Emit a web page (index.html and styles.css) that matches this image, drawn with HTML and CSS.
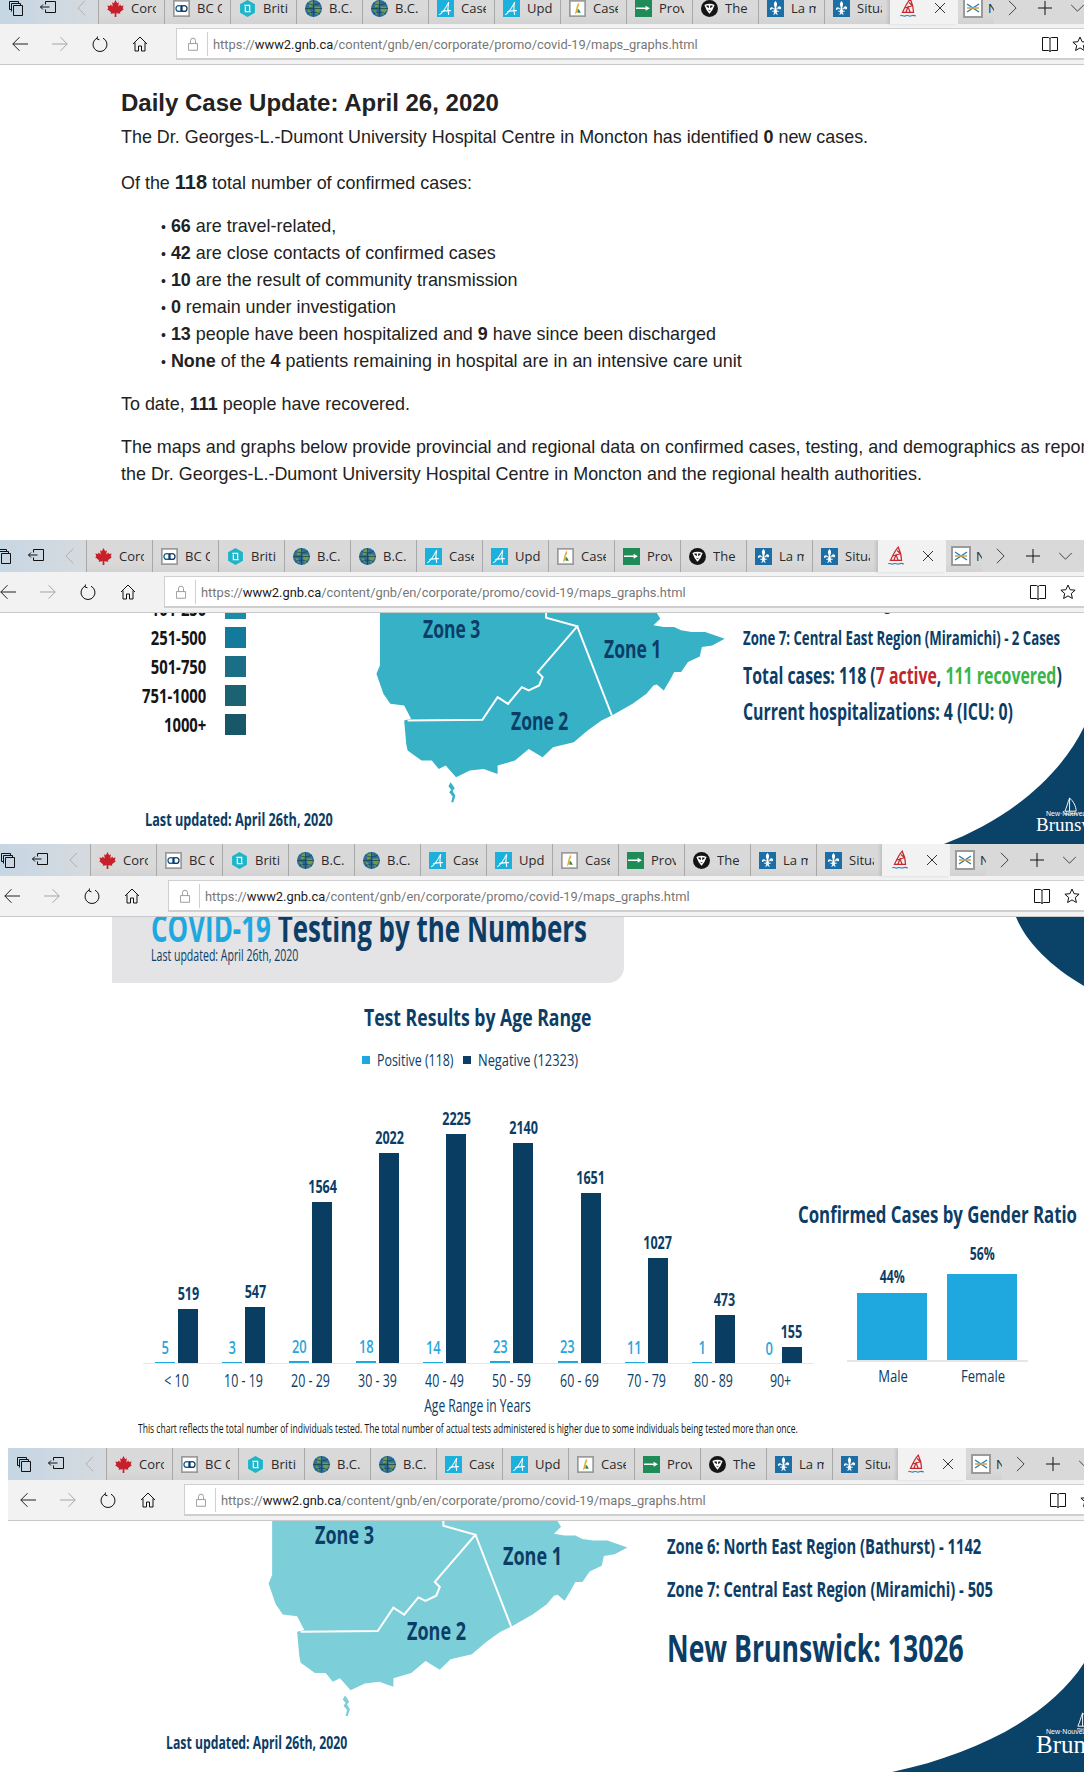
FILE: index.html
```html
<!DOCTYPE html>
<html lang="en">
<head>
<meta charset="utf-8">
<title>COVID-19 maps and graphs</title>
<link rel="stylesheet" href="styles.css">
</head>
<body>
<svg class="defs" aria-hidden="true">
  <symbol id="f-leaf" viewBox="0 0 16 16"><path fill="#c8202a" d="M8 0l1.600 3 1.600-.8-.6 4 2-2 .6 1.400 2.400-.4-.8 2.600 1 .8-3.600 3 .4 1.400-3.800-.5V16H7.200v-3.500l-3.800.5.4-1.400-3.600-3 1-.8-.8-2.600 2.400.4.600-1.400 2 2-.6-4 1.600.8z"/></symbol>
  <symbol id="f-cbc" viewBox="0 0 20 20"><rect x="1" y="1" width="18" height="18" fill="#fff" stroke="#9a9a9a" stroke-width="2"/><circle cx="7" cy="10" r="3.500" fill="none" stroke="#1b5f8e" stroke-width="1.500"/><circle cx="13" cy="10" r="3.500" fill="none" stroke="#123c66" stroke-width="1.500"/><rect x="9" y="6" width="2" height="8" fill="#123c66"/></symbol>
  <symbol id="f-hex" viewBox="0 0 16 16"><path fill="#1fb5c9" d="M8 0l7 4v8l-7 4-7-4V4z"/><path fill="none" stroke="#fff" stroke-width="1.200" d="M5 5h5v5M11 11H6V6"/></symbol>
  <symbol id="f-globe" viewBox="0 0 16 16"><circle cx="8" cy="8" r="8" fill="#2a6d9b"/><path fill="#6f9c46" d="M3 3l4-2 2 2-2 3-3 1zM9 6l5 0 1 3-3 5-2-1zM2 9l3 1 1 4-2-1z"/><path fill="none" stroke="#1d3f50" stroke-width=".7" d="M0 8h16M8 0v16M2 3c4 2 8 2 12 0M2 13c4-2 8-2 12 0"/></symbol>
  <symbol id="f-a" viewBox="0 0 16 16"><rect width="16" height="16" fill="#1cb0dc"/><path fill="none" stroke="#fff" stroke-width="1" d="M2 14C6 12 9 6 11 2c-1 4-1 8 0 12M4 11c3-1 6-1 9-1"/></symbol>
  <symbol id="f-case" viewBox="0 0 20 20"><rect x="1" y="1" width="18" height="18" fill="#fff" stroke="#9a9a9a" stroke-width="2"/><path fill="#e0a93a" d="M11 3l1 3-2 4 1 3-4 4 1-5 1-4z"/><path fill="#2c8a4a" d="M11 10l3 5h-4z"/></symbol>
  <symbol id="f-green" viewBox="0 0 16 16"><rect width="16" height="16" fill="#1f8b57"/><path fill="#fff" d="M1 7h9v1.500H1zM10 5.500l4 2.200-4 2.300z"/></symbol>
  <symbol id="f-on" viewBox="0 0 16 16"><circle cx="8" cy="8" r="8" fill="#151515"/><path fill="none" stroke="#fff" stroke-width="1.300" d="M4 5c2-1 6-1 8 0-1 3-2 5-4 7-2-2-3-4-4-7zM8 5v4M5 7l3 2 3-2"/></symbol>
  <symbol id="f-qc" viewBox="0 0 16 16"><rect width="16" height="16" fill="#1b6ea6"/><path fill="#fff" d="M8 1c1.500 1.500 2 3 1 5l-.4 2h1.200c-.4-1.500 2-3 3.200-1.500.8 1.200-.2 2.700-1.500 2.200.4-.8-.6-1.200-1 0H8.800l.7 1.300H11v1H9c.2 1 .8 1.500 1 3-1 0-1.600-.8-2-1.500-.4.700-1 1.500-2 1.500.2-1.500.8-2 1-3H5v-1h1.500l.7-1.300H5.500c-.4-1.200-1.400-.8-1 0C3.200 10.200 2.200 8.700 3 7.500 4.200 6 6.600 7.500 6.200 8h1.200L7 6C6 4 6.500 2.500 8 1z"/></symbol>
  <symbol id="f-sail" viewBox="0 0 16 18"><path fill="none" stroke="#c8282c" stroke-width="1.100" d="M10 1C7 4 5 9 3 13h10c0-4-1-8-3-12zM9 4l3 3-7 2M6 13l2-5 2 5"/><path fill="none" stroke="#2a7fc0" stroke-width="1.100" d="M1 16c2-1 3 1 5 0s3 1 5 0 3 0 4 0"/></symbol>
  <symbol id="f-nb" viewBox="0 0 20 20"><rect x="1" y="1" width="18" height="18" fill="#fff" stroke="#9a9a9a" stroke-width="2"/><path fill="none" stroke="#2c7fb0" stroke-width="1.500" d="M4 6l12 8M16 6L4 14"/><path fill="none" stroke="#d8a040" stroke-width="1.500" d="M4 10h12"/></symbol>
  <symbol id="i-tabs" viewBox="0 0 16 16"><path fill="none" stroke="#111" d="M1.500 1.500h9v2M1.500 1.500v8h2M3.500 3.500h9v2M3.500 3.500v8M5.500 5.500h9v10h-9z"/></symbol>
  <symbol id="i-aside" viewBox="0 0 16 16"><path fill="none" stroke="#111" d="M5.500 4.500V1.500h10v11h-10V9.500M.5 7h9M3 4.500L.5 7 3 9.500"/></symbol>
  <symbol id="i-left" viewBox="0 0 16 16"><path fill="none" stroke="currentColor" d="M16 8H.8M7.500 1.200L.8 8l6.700 6.800"/></symbol>
  <symbol id="i-refresh" viewBox="0 0 16 16"><path fill="none" stroke="#111" d="M5 2.200A7 7 0 1 0 11 2.200M5.500.5L5 3l2.500.8"/></symbol>
  <symbol id="i-home" viewBox="0 0 16 16"><path fill="none" stroke="#111" d="M1 8l7-7 7 7M3 6.500v8.500h3.500v-5h3v5H13V6.500"/></symbol>
  <symbol id="i-lock" viewBox="0 0 12 16"><path fill="none" stroke="#8a8a8a" d="M3 7V4a3 3 0 0 1 6 0v3M.5 7.500h11v8H.5z"/></symbol>
  <symbol id="i-book" viewBox="0 0 16 16"><path fill="none" stroke="#111" d="M.5 1.500h6l1.500 1v13l-1.500-1h-6zM15.500 1.500h-6L8 2.500M15.500 1.500v13h-6L8 15.500"/></symbol>
  <symbol id="i-star" viewBox="0 0 16 16"><path fill="none" stroke="#111" d="M8 1l2.100 4.700 5 .5-3.800 3.300 1.100 5L8 11.900l-4.400 2.600 1.100-5L.9 6.200l5-.5z"/></symbol>
  <symbol id="i-x" viewBox="0 0 12 12"><path fill="none" stroke="#333" d="M1 1l10 10M11 1L1 11"/></symbol>
  <symbol id="i-plus" viewBox="0 0 16 16"><path fill="none" stroke="#111" d="M8 1v14M1 8h14"/></symbol>
  <symbol id="i-next" viewBox="0 0 10 18"><path fill="none" stroke="currentColor" d="M1 1l8 8-8 8"/></symbol>
  <symbol id="i-down" viewBox="0 0 16 10"><path fill="none" stroke="#333" d="M1 1l7 7 7-7"/></symbol>
  <symbol id="brand-sail" viewBox="0 0 16 20"><path fill="none" stroke="#fff" stroke-width="1" d="M7 1C5 6 4 11 2 15h12C14 10 11 4 7 1zM7 1v14M1 18c3-1 5 1 7 0s4 0 7 0"/></symbol>
  <symbol id="nb-map" viewBox="540 248 520 590" preserveAspectRatio="none">
    <path fill="currentColor" d="M550 248H950L955 265 945 285 960 290 975 290 985 300 1000 305 1020 305 1048 325 1030 345 1015 350 1012 378 995 395 985 425 975 425 970 445 960 480 950 462 945 465 935 490 915 520 885 555 870 570 850 600 830 635 800 650 785 680 765 655 745 690 720 705 720 730 700 715 680 720 660 740 645 705 635 715 625 690 610 690 590 660 588 640 585 570 595 565 585 525 565 520 555 490 545 430 550 405Z"/>
    <path fill="currentColor" d="M652 755l-3 12 4 10-3 8 5 12-2 18 3 0 3-20-4-14 3-8-3-10z"/>
    <path fill="none" stroke="#fff" stroke-width="2" vector-effect="non-scaling-stroke" d="M790 248V262L835 288 778 425 785 440 780 465 765 480 755 470 735 520 720 500 698 568 590 570M835 288L885 555"/>
  </symbol>
</svg>

<section class="slice slice-one">
  <div class="chrome chrome-one">
    <div class="tabstrip">
      <span class="sysicon"><svg class="i16"><use href="#i-tabs"/></svg></span>
      <span class="sysicon"><svg class="i16"><use href="#i-aside"/></svg></span>
      <span class="sysicon prev"><svg class="i-nav"><use href="#i-next"/></svg></span>
      <div class="tab"><svg class="fav"><use href="#f-leaf"/></svg><span class="tab-t">Coronavirus</span></div>
      <div class="tab"><svg class="fav"><use href="#f-cbc"/></svg><span class="tab-t">BC Centre</span></div>
      <div class="tab"><svg class="fav"><use href="#f-hex"/></svg><span class="tab-t">British</span></div>
      <div class="tab"><svg class="fav"><use href="#f-globe"/></svg><span class="tab-t">B.C.</span></div>
      <div class="tab"><svg class="fav"><use href="#f-globe"/></svg><span class="tab-t">B.C.</span></div>
      <div class="tab"><svg class="fav"><use href="#f-a"/></svg><span class="tab-t">Cases</span></div>
      <div class="tab"><svg class="fav"><use href="#f-a"/></svg><span class="tab-t">Update</span></div>
      <div class="tab"><svg class="fav"><use href="#f-case"/></svg><span class="tab-t">Cases</span></div>
      <div class="tab"><svg class="fav"><use href="#f-green"/></svg><span class="tab-t">Province</span></div>
      <div class="tab"><svg class="fav"><use href="#f-on"/></svg><span class="tab-t">The</span></div>
      <div class="tab"><svg class="fav"><use href="#f-qc"/></svg><span class="tab-t">La ma</span></div>
      <div class="tab"><svg class="fav"><use href="#f-qc"/></svg><span class="tab-t">Situation</span></div>
      <div class="tab active"><svg class="fav"><use href="#f-sail"/></svg><svg class="tab-x"><use href="#i-x"/></svg></div>
      <div class="tab last"><svg class="fav"><use href="#f-nb"/></svg><span class="tab-t">N</span></div>
      <span class="sysicon next"><svg class="i-nav"><use href="#i-next"/></svg></span>
      <span class="sysicon plus"><svg class="i16"><use href="#i-plus"/></svg></span>
      <span class="sysicon down"><svg class="i-down"><use href="#i-down"/></svg></span>
    </div>
    <div class="toolbar">
      <span class="navbtn"><svg class="i16"><use href="#i-left"/></svg></span>
      <span class="navbtn off"><svg class="i16 flip"><use href="#i-left"/></svg></span>
      <span class="navbtn"><svg class="i16"><use href="#i-refresh"/></svg></span>
      <span class="navbtn"><svg class="i16"><use href="#i-home"/></svg></span>
      <div class="address">
        <svg class="lock"><use href="#i-lock"/></svg>
        <span class="url">https://<b>www2.gnb.ca</b>/content/gnb/en/corporate/promo/covid-19/maps_graphs.html</span>
        <svg class="i16 book"><use href="#i-book"/></svg>
        <svg class="i16 star"><use href="#i-star"/></svg>
      </div>
    </div>
  </div>
  <article class="update">
    <h1>Daily Case Update: April 26, 2020</h1>
    <p class="first">The Dr. Georges-L.-Dumont University Hospital Centre in Moncton has identified <b>0</b> new cases.</p>
    <p class="gap19">Of the <b class="big">118</b> total number of confirmed cases:</p>
    <ul>
      <li><b>66</b> are travel-related,</li>
      <li><b>42</b> are close contacts of confirmed cases</li>
      <li><b>10</b> are the result of community transmission</li>
      <li><b>0</b> remain under investigation</li>
      <li><b>13</b> people have been hospitalized and <b>9</b> have since been discharged</li>
      <li><b>None</b> of the <b>4</b> patients remaining in hospital are in an intensive care unit</li>
    </ul>
    <p class="gap16">To date, <b>111</b> people have recovered.</p>
    <p class="gap15">The maps and graphs below provide provincial and regional data on confirmed cases, testing, and demographics as reported by<br>the Dr. Georges-L.-Dumont University Hospital Centre in Moncton and the regional health authorities.</p>
  </article>
</section>

<section class="slice slice-two">
  <div class="chrome chrome-two">
    <div class="tabstrip">
      <span class="sysicon"><svg class="i16"><use href="#i-tabs"/></svg></span>
      <span class="sysicon"><svg class="i16"><use href="#i-aside"/></svg></span>
      <span class="sysicon prev"><svg class="i-nav"><use href="#i-next"/></svg></span>
      <div class="tab"><svg class="fav"><use href="#f-leaf"/></svg><span class="tab-t">Coronavirus</span></div>
      <div class="tab"><svg class="fav"><use href="#f-cbc"/></svg><span class="tab-t">BC Centre</span></div>
      <div class="tab"><svg class="fav"><use href="#f-hex"/></svg><span class="tab-t">British</span></div>
      <div class="tab"><svg class="fav"><use href="#f-globe"/></svg><span class="tab-t">B.C.</span></div>
      <div class="tab"><svg class="fav"><use href="#f-globe"/></svg><span class="tab-t">B.C.</span></div>
      <div class="tab"><svg class="fav"><use href="#f-a"/></svg><span class="tab-t">Cases</span></div>
      <div class="tab"><svg class="fav"><use href="#f-a"/></svg><span class="tab-t">Update</span></div>
      <div class="tab"><svg class="fav"><use href="#f-case"/></svg><span class="tab-t">Cases</span></div>
      <div class="tab"><svg class="fav"><use href="#f-green"/></svg><span class="tab-t">Province</span></div>
      <div class="tab"><svg class="fav"><use href="#f-on"/></svg><span class="tab-t">The</span></div>
      <div class="tab"><svg class="fav"><use href="#f-qc"/></svg><span class="tab-t">La ma</span></div>
      <div class="tab"><svg class="fav"><use href="#f-qc"/></svg><span class="tab-t">Situation</span></div>
      <div class="tab active"><svg class="fav"><use href="#f-sail"/></svg><svg class="tab-x"><use href="#i-x"/></svg></div>
      <div class="tab last"><svg class="fav"><use href="#f-nb"/></svg><span class="tab-t">N</span></div>
      <span class="sysicon next"><svg class="i-nav"><use href="#i-next"/></svg></span>
      <span class="sysicon plus"><svg class="i16"><use href="#i-plus"/></svg></span>
      <span class="sysicon down"><svg class="i-down"><use href="#i-down"/></svg></span>
    </div>
    <div class="toolbar">
      <span class="navbtn"><svg class="i16"><use href="#i-left"/></svg></span>
      <span class="navbtn off"><svg class="i16 flip"><use href="#i-left"/></svg></span>
      <span class="navbtn"><svg class="i16"><use href="#i-refresh"/></svg></span>
      <span class="navbtn"><svg class="i16"><use href="#i-home"/></svg></span>
      <div class="address">
        <svg class="lock"><use href="#i-lock"/></svg>
        <span class="url">https://<b>www2.gnb.ca</b>/content/gnb/en/corporate/promo/covid-19/maps_graphs.html</span>
        <svg class="i16 book"><use href="#i-book"/></svg>
        <svg class="i16 star"><use href="#i-star"/></svg>
      </div>
    </div>
  </div>
  <div class="infomap map-cases">
    <div class="leftcol">
      <div class="legend">
        <div class="legend-row"><span class="legend-label"><span class="legend-text">101-250</span></span><i class="sw sw1"></i></div>
        <div class="legend-row"><span class="legend-label"><span class="legend-text">251-500</span></span><i class="sw sw2"></i></div>
        <div class="legend-row"><span class="legend-label"><span class="legend-text">501-750</span></span><i class="sw sw3"></i></div>
        <div class="legend-row"><span class="legend-label"><span class="legend-text">751-1000</span></span><i class="sw sw4"></i></div>
        <div class="legend-row"><span class="legend-label"><span class="legend-text">1000+</span></span><i class="sw sw5"></i></div>
      </div>
      <div class="updated">Last updated: April 26th, 2020</div>
    </div>
    <div class="mapwrap">
      <svg class="mapsvg"><use href="#nb-map"/></svg>
      <span class="zone z3">Zone 3</span>
      <span class="zone z1">Zone 1</span>
      <span class="zone z2">Zone 2</span>
    </div>
    <div class="facts">
      <div class="fact clipped">Zone 6: North East Region (Bathurst) - 42 Cases</div>
      <div class="fact">Zone 7: Central East Region (Miramichi) - 2 Cases</div>
      <div class="fact strong">Total cases: 118 (<span class="red">7 active</span>, <span class="green">111 recovered</span>)</div>
      <div class="fact strong hosp">Current hospitalizations: 4 (ICU: 0)</div>
    </div>
    <svg class="swoosh" viewBox="0 0 142 117" preserveAspectRatio="none"><path d="M2 117C60 95 115 55 142 0V117Z"/></svg>
    <div class="brand"><svg class="brand-sail"><use href="#brand-sail"/></svg><span class="brand-new">New·Nouveau</span><span class="brand-name">Brunswick</span></div>
  </div>
</section>

<section class="slice slice-three">
  <div class="chrome chrome-three">
    <div class="tabstrip">
      <span class="sysicon"><svg class="i16"><use href="#i-tabs"/></svg></span>
      <span class="sysicon"><svg class="i16"><use href="#i-aside"/></svg></span>
      <span class="sysicon prev"><svg class="i-nav"><use href="#i-next"/></svg></span>
      <div class="tab"><svg class="fav"><use href="#f-leaf"/></svg><span class="tab-t">Coronavirus</span></div>
      <div class="tab"><svg class="fav"><use href="#f-cbc"/></svg><span class="tab-t">BC Centre</span></div>
      <div class="tab"><svg class="fav"><use href="#f-hex"/></svg><span class="tab-t">British</span></div>
      <div class="tab"><svg class="fav"><use href="#f-globe"/></svg><span class="tab-t">B.C.</span></div>
      <div class="tab"><svg class="fav"><use href="#f-globe"/></svg><span class="tab-t">B.C.</span></div>
      <div class="tab"><svg class="fav"><use href="#f-a"/></svg><span class="tab-t">Cases</span></div>
      <div class="tab"><svg class="fav"><use href="#f-a"/></svg><span class="tab-t">Update</span></div>
      <div class="tab"><svg class="fav"><use href="#f-case"/></svg><span class="tab-t">Cases</span></div>
      <div class="tab"><svg class="fav"><use href="#f-green"/></svg><span class="tab-t">Province</span></div>
      <div class="tab"><svg class="fav"><use href="#f-on"/></svg><span class="tab-t">The</span></div>
      <div class="tab"><svg class="fav"><use href="#f-qc"/></svg><span class="tab-t">La ma</span></div>
      <div class="tab"><svg class="fav"><use href="#f-qc"/></svg><span class="tab-t">Situation</span></div>
      <div class="tab active"><svg class="fav"><use href="#f-sail"/></svg><svg class="tab-x"><use href="#i-x"/></svg></div>
      <div class="tab last"><svg class="fav"><use href="#f-nb"/></svg><span class="tab-t">N</span></div>
      <span class="sysicon next"><svg class="i-nav"><use href="#i-next"/></svg></span>
      <span class="sysicon plus"><svg class="i16"><use href="#i-plus"/></svg></span>
      <span class="sysicon down"><svg class="i-down"><use href="#i-down"/></svg></span>
    </div>
    <div class="toolbar">
      <span class="navbtn"><svg class="i16"><use href="#i-left"/></svg></span>
      <span class="navbtn off"><svg class="i16 flip"><use href="#i-left"/></svg></span>
      <span class="navbtn"><svg class="i16"><use href="#i-refresh"/></svg></span>
      <span class="navbtn"><svg class="i16"><use href="#i-home"/></svg></span>
      <div class="address">
        <svg class="lock"><use href="#i-lock"/></svg>
        <span class="url">https://<b>www2.gnb.ca</b>/content/gnb/en/corporate/promo/covid-19/maps_graphs.html</span>
        <svg class="i16 book"><use href="#i-book"/></svg>
        <svg class="i16 star"><use href="#i-star"/></svg>
      </div>
    </div>
  </div>
  <div class="testing">
    <svg class="swoosh-top" viewBox="0 0 68 69" preserveAspectRatio="none"><path d="M0 0C10 25 35 50 68 69V0Z"/></svg>
    <header class="banner">
      <h2 class="banner-title"><span class="cyan">COVID-19</span> Testing by the Numbers</h2>
      <div class="banner-sub">Last updated: April 26th, 2020</div>
    </header>
    <h3 class="chart-title">Test Results by Age Range</h3>
    <div class="chart-key"><i class="key key-pos"></i><span class="key-label key-label-pos">Positive (118)</span><i class="key key-neg"></i><span class="key-label key-label-neg">Negative (12323)</span></div>
    <div class="charts">
      <div class="age">
        <div class="plot">
          <div class="group"><div class="col pos"><span>5</span><i style="height:1px"></i></div><div class="col neg"><span>519</span><i style="height:54px"></i></div></div>
          <div class="group"><div class="col pos"><span>3</span><i style="height:1px"></i></div><div class="col neg"><span>547</span><i style="height:56px"></i></div></div>
          <div class="group"><div class="col pos"><span>20</span><i style="height:2px"></i></div><div class="col neg"><span>1564</span><i style="height:161px"></i></div></div>
          <div class="group"><div class="col pos"><span>18</span><i style="height:2px"></i></div><div class="col neg"><span>2022</span><i style="height:210px"></i></div></div>
          <div class="group"><div class="col pos"><span>14</span><i style="height:1px"></i></div><div class="col neg"><span>2225</span><i style="height:229px"></i></div></div>
          <div class="group"><div class="col pos"><span>23</span><i style="height:2px"></i></div><div class="col neg"><span>2140</span><i style="height:220px"></i></div></div>
          <div class="group"><div class="col pos"><span>23</span><i style="height:2px"></i></div><div class="col neg"><span>1651</span><i style="height:170px"></i></div></div>
          <div class="group"><div class="col pos"><span>11</span><i style="height:1px"></i></div><div class="col neg"><span>1027</span><i style="height:105px"></i></div></div>
          <div class="group"><div class="col pos"><span>1</span><i style="height:1px"></i></div><div class="col neg"><span>473</span><i style="height:48px"></i></div></div>
          <div class="group"><div class="col pos"><span>0</span><i style="height:0"></i></div><div class="col neg"><span>155</span><i style="height:16px"></i></div></div>
        </div>
        <div class="ticks">
          <span>&lt; 10</span><span>10 - 19</span><span>20 - 29</span><span>30 - 39</span><span>40 - 49</span><span>50 - 59</span><span>60 - 69</span><span>70 - 79</span><span>80 - 89</span><span>90+</span>
        </div>
        <div class="axis-title">Age Range in Years</div>
      </div>
      <div class="gender">
        <h3 class="gender-title">Confirmed Cases by Gender Ratio</h3>
        <div class="gender-plot">
          <div class="gcol gcol-male"><span>44%</span><i style="height:67px"></i></div>
          <div class="gcol gcol-female"><span>56%</span><i style="height:86px"></i></div>
        </div>
        <div class="gender-ticks"><span>Male</span><span>Female</span></div>
      </div>
    </div>
    <p class="footnote">This chart reflects the total number of individuals tested. The total number of actual tests administered is higher due to some individuals being tested more than once.</p>
  </div>
</section>

<section class="slice slice-four">
  <div class="chrome chrome-four">
    <div class="tabstrip">
      <span class="sysicon"><svg class="i16"><use href="#i-tabs"/></svg></span>
      <span class="sysicon"><svg class="i16"><use href="#i-aside"/></svg></span>
      <span class="sysicon prev"><svg class="i-nav"><use href="#i-next"/></svg></span>
      <div class="tab"><svg class="fav"><use href="#f-leaf"/></svg><span class="tab-t">Coronavirus</span></div>
      <div class="tab"><svg class="fav"><use href="#f-cbc"/></svg><span class="tab-t">BC Centre</span></div>
      <div class="tab"><svg class="fav"><use href="#f-hex"/></svg><span class="tab-t">British</span></div>
      <div class="tab"><svg class="fav"><use href="#f-globe"/></svg><span class="tab-t">B.C.</span></div>
      <div class="tab"><svg class="fav"><use href="#f-globe"/></svg><span class="tab-t">B.C.</span></div>
      <div class="tab"><svg class="fav"><use href="#f-a"/></svg><span class="tab-t">Cases</span></div>
      <div class="tab"><svg class="fav"><use href="#f-a"/></svg><span class="tab-t">Update</span></div>
      <div class="tab"><svg class="fav"><use href="#f-case"/></svg><span class="tab-t">Cases</span></div>
      <div class="tab"><svg class="fav"><use href="#f-green"/></svg><span class="tab-t">Province</span></div>
      <div class="tab"><svg class="fav"><use href="#f-on"/></svg><span class="tab-t">The</span></div>
      <div class="tab"><svg class="fav"><use href="#f-qc"/></svg><span class="tab-t">La ma</span></div>
      <div class="tab"><svg class="fav"><use href="#f-qc"/></svg><span class="tab-t">Situation</span></div>
      <div class="tab active"><svg class="fav"><use href="#f-sail"/></svg><svg class="tab-x"><use href="#i-x"/></svg></div>
      <div class="tab last"><svg class="fav"><use href="#f-nb"/></svg><span class="tab-t">N</span></div>
      <span class="sysicon next"><svg class="i-nav"><use href="#i-next"/></svg></span>
      <span class="sysicon plus"><svg class="i16"><use href="#i-plus"/></svg></span>
      <span class="sysicon down"><svg class="i-down"><use href="#i-down"/></svg></span>
    </div>
    <div class="toolbar">
      <span class="navbtn"><svg class="i16"><use href="#i-left"/></svg></span>
      <span class="navbtn off"><svg class="i16 flip"><use href="#i-left"/></svg></span>
      <span class="navbtn"><svg class="i16"><use href="#i-refresh"/></svg></span>
      <span class="navbtn"><svg class="i16"><use href="#i-home"/></svg></span>
      <div class="address">
        <svg class="lock"><use href="#i-lock"/></svg>
        <span class="url">https://<b>www2.gnb.ca</b>/content/gnb/en/corporate/promo/covid-19/maps_graphs.html</span>
        <svg class="i16 book"><use href="#i-book"/></svg>
        <svg class="i16 star"><use href="#i-star"/></svg>
      </div>
    </div>
  </div>
  <div class="infomap map-tests">
    <div class="leftcol">
      <div class="updated">Last updated: April 26th, 2020</div>
    </div>
    <div class="mapwrap">
      <svg class="mapsvg"><use href="#nb-map"/></svg>
      <span class="zone z3">Zone 3</span>
      <span class="zone z1">Zone 1</span>
      <span class="zone z2">Zone 2</span>
    </div>
    <div class="facts">
      <div class="fact">Zone 6: North East Region (Bathurst) - 1142</div>
      <div class="fact">Zone 7: Central East Region (Miramichi) - 505</div>
      <div class="fact total">New Brunswick: 13026</div>
    </div>
    <svg class="swoosh" viewBox="0 0 192 109" preserveAspectRatio="none"><path d="M0 109C90 90 160 50 192 0V109Z"/></svg>
    <div class="brand"><svg class="brand-sail"><use href="#brand-sail"/></svg><span class="brand-new">New·Nouveau</span><span class="brand-name">Brunswick</span></div>
  </div>
</section>
</body>
</html>
```
FILE: styles.css
```css
* { box-sizing: border-box; }
html, body { margin: 0; padding: 0; background: #fff; }
body { width: 1084px; height: 1772px; overflow: hidden; font-family: "Liberation Sans", Arial, sans-serif; color: #222; }
.defs { position: absolute; width: 0; height: 0; }

.slice { position: relative; overflow: hidden; width: 1084px; }
.slice-one { height: 540px; }
.slice-two { height: 304px; }
.slice-three { height: 604px; }
.slice-four { height: 324px; }

/* browser chrome */
.chrome { width: 1180px; }
.chrome-one { margin-top: -8px; }
.chrome-two { margin-left: -12px; }
.chrome-three { margin-left: -8px; }
.chrome-four { margin-left: 8px; }

.tabstrip { display: flex; align-items: stretch; height: 32px; background: linear-gradient(90deg, #c5d6e4 0, #d4dadf 90px, #d9d9d9 200px); }
.sysicon { width: 32px; display: flex; align-items: center; justify-content: center; flex: none; color: #111; }
.sysicon.prev { width: 34px; color: #aaa; }
.sysicon.prev .i-nav { transform: scaleX(-1); }
.sysicon.next { width: 36px; color: #333; }
.sysicon.plus { width: 30px; }
.sysicon.down { width: 34px; }
.i16 { width: 16px; height: 16px; display: block; flex: none; }
.i-nav { width: 9px; height: 18px; display: block; }
.i-down { width: 15px; height: 9px; display: block; }

.tab { width: 66px; flex: none; display: flex; align-items: center; padding-left: 8px; border-left: 1px solid #a8a8a8; background: linear-gradient(#d9d9d9 70%, #d2d2d2); overflow: hidden; }
.fav { width: 17px; height: 17px; flex: none; display: block; }
.tab-t { margin-left: 7px; width: 25px; font: 13px/16px "Open Sans", sans-serif; color: #2a2a2a; white-space: nowrap; overflow: hidden; }
.tab.active { width: 68px; background: #f2f2f2; border-left: 0; padding-left: 9px; box-shadow: -2px 0 3px rgba(0,0,0,.12); }
.tab.active .fav { width: 18px; height: 20px; }
.tab-x { width: 12px; height: 12px; margin-left: 17px; flex: none; display: block; }
.tab.last { width: 36px; padding-left: 5px; border-left: 0; }
.tab.last .fav { width: 20px; height: 20px; }
.tab.last .tab-t { margin-left: 5px; width: 6px; }

.toolbar { display: flex; align-items: flex-start; height: 41px; background: #f2f2f2; border-bottom: 1px solid #c9c9c9; padding-top: 4px; }
.navbtn { width: 40px; height: 32px; flex: none; display: flex; align-items: center; justify-content: center; color: #222; }
.navbtn.off { color: #a5a5a5; }
.flip { transform: scaleX(-1); }
.address { flex: 1; margin-left: 16px; height: 32px; background: #fff; border: 1px solid #cfcfcf; border-bottom-width: 2px; display: flex; align-items: center; padding-left: 11px; }
.lock { width: 10px; height: 14px; flex: none; display: block; }
.url { margin-left: 9px; padding-left: 5px; height: 24px; border-left: 1px solid #d0d0d0; flex: 1; font: 12.9px/26px Roboto, sans-serif; color: #777; white-space: nowrap; }
.url b { font-weight: 400; color: #1a1a1a; }
.book { margin-right: 14px; }
.star { margin-right: 91px; }

/* article */
.update { padding: 23px 0 0 121px; font-size: 17.93px; line-height: 27px; white-space: nowrap; color: #222; }
.update h1 { margin: 0; font-size: 24px; line-height: 30px; font-weight: 700; color: #222; }
.update p { margin: 0; }
.update .first { margin-top: 6px; }
.gap19 { margin-top: 19px !important; }
.gap16 { margin-top: 16px !important; }
.gap15 { margin-top: 16px !important; }
.big { font-size: 20px; line-height: 0; }
.update ul { list-style: none; margin: 16px 0 0; padding: 0 0 0 40px; }
.update li::before { content: "•"; margin-right: 5px; font-size: 14px; line-height: 0; }

/* condensed infographic type: Open Sans squeezed horizontally */
.legend-text, .updated, .zone, .fact, .banner-title, .banner-sub, .chart-title, .key-label, .col span, .ticks, .axis-title, .gender-title, .gcol span, .gender-ticks, .footnote {
  font-family: "Open Sans", sans-serif;
}

.infomap { position: relative; display: flex; height: 231px; overflow: hidden; }
.map-tests { height: 251px; }
.leftcol { flex: none; width: 373px; display: flex; flex-direction: column; justify-content: space-between; }
.map-tests .leftcol { width: 265px; justify-content: flex-end; }
.legend { margin-top: -19px; }
.legend-row { display: flex; align-items: center; height: 29px; }
.legend-label { width: 206px; text-align: right; }
.legend-text { display: inline-block; font-size: 19px; font-weight: 700; color: #141414; white-space: nowrap; transform: scaleX(.78); transform-origin: 100% 50%; }
.sw { display: block; width: 21px; height: 21px; margin-left: 19px; }
.sw1 { background: #1a8ca8; }
.sw2 { background: #137a9c; }
.sw3 { background: #1a6f87; }
.sw4 { background: #1b6273; }
.sw5 { background: #175767; }
.updated { margin: 0 0 13px 145px; font-size: 18px; line-height: 24px; font-weight: 700; color: #0b3d66; white-space: nowrap; transform: scaleX(.705); transform-origin: 0 50%; }
.map-tests .updated { margin: 0 0 18px 166px; transform: scaleX(.68); }

.mapwrap { position: relative; flex: none; width: 360px; height: 197px; color: #36b1c6; }
.map-tests .mapwrap { width: 371px; height: 203px; color: #7ccfd9; }
.mapsvg { display: block; width: 100%; height: 100%; }
.zone { position: absolute; font-size: 25px; line-height: 28px; font-weight: 700; color: #0b3d66; white-space: nowrap; transform: scaleX(.7); transform-origin: 0 50%; }
.z3 { left: 50px; top: 1px; }
.z1 { left: 231px; top: 21px; }
.z2 { left: 138px; top: 93px; }
.map-tests .zone { transform: scaleX(.72); }
.map-tests .z3 { top: -1px; }
.map-tests .z1 { left: 238px; top: 20px; }
.map-tests .z2 { left: 142px; top: 95px; }

.facts { flex: none; margin-left: 10px; }
.map-tests .facts { margin-left: 31px; padding-top: 10px; }
.fact { font-size: 20px; line-height: 30px; font-weight: 700; color: #0b3d66; white-space: nowrap; margin-bottom: 8px; transform: scaleX(.66); transform-origin: 0 50%; }
.map-tests .fact { font-size: 21px; margin-bottom: 13px; transform: scaleX(.703); }
.clipped { margin-top: -26px; margin-bottom: 6px; }
.strong { font-size: 23px; transform: scaleX(.69); margin-top: -1px; }
.hosp { margin-bottom: 0; margin-top: -2px; transform: scaleX(.69); }
.red { color: #c0272d; }
.green { color: #39b54a; }
.map-tests .total { font-size: 38px; line-height: 50px; margin-top: 18px; transform: scaleX(.7); }

.swoosh { position: absolute; right: 0; bottom: 0; width: 142px; height: 117px; fill: #0a4268; }
.map-tests .swoosh { width: 192px; height: 109px; }
.brand { position: absolute; left: 1036px; bottom: 12px; color: #fff; font-family: "Liberation Serif", serif; white-space: nowrap; display: flex; flex-direction: column; }
.brand-sail { position: absolute; left: 27px; top: -14px; width: 15px; height: 19px; }
.brand-new { font-size: 7px; line-height: 6px; margin-left: 10px; font-family: "Liberation Sans", sans-serif; }
.brand-name { font-size: 19px; line-height: 15px; }
.map-tests .brand { bottom: 17px; }
.map-tests .brand-sail { left: 40px; top: -17px; }
.map-tests .brand-name { font-size: 25px; line-height: 20px; }

/* testing */
.testing { position: relative; }
.swoosh-top { position: absolute; top: 0; right: 0; width: 68px; height: 69px; fill: #0a4268; }
.banner { margin-left: 112px; width: 512px; height: 66px; background: #e4e3e5; border-bottom-right-radius: 16px; padding-left: 39px; overflow: hidden; }
.banner-title { margin: -9px 0 0; font-size: 38px; line-height: 38px; font-weight: 700; color: #0b3d66; white-space: nowrap; transform: scaleX(.683); transform-origin: 0 50%; }
.cyan { color: #1ea8df; }
.banner-sub { font-size: 16px; line-height: 18px; margin-top: 0; font-weight: 500; color: #0b3d66; white-space: nowrap; transform: scaleX(.66); transform-origin: 0 50%; }
.chart-title { margin: 19px 0 0 364px; font-size: 24px; line-height: 30px; font-weight: 700; color: #0b3d66; white-space: nowrap; transform: scaleX(.734); transform-origin: 0 50%; }
.chart-key { display: flex; align-items: center; margin: 18px 0 0 362px; height: 20px; color: #0b3d66; }
.key { display: block; flex: none; width: 8px; height: 8px; }
.key-pos { background: #1ea8df; }
.key-neg { background: #0b3d66; }
.key-label { display: block; flex: none; margin-left: 7px; font-size: 17px; line-height: 20px; white-space: nowrap; transform-origin: 0 50%; }
.key-label-pos { width: 86px; transform: scaleX(.73); }
.key-label-neg { width: 101px; transform: scaleX(.755); }
.charts { display: flex; margin-left: 143px; }
.age { flex: none; width: 671px; }
.plot { display: flex; height: 294px; border-bottom: 1px solid #e6e6e6; }
.group { width: 67.1px; flex: none; display: flex; align-items: flex-end; gap: 3px; padding-left: 12px; }
.col { width: 20px; flex: none; display: flex; flex-direction: column; align-items: center; }
.col i { display: block; width: 20px; }
.col span { font-size: 18px; line-height: 22px; margin-bottom: 5px; font-weight: 700; white-space: nowrap; transform: scaleX(.7); }
.pos span { color: #2aa6dc; font-weight: 600; margin-bottom: 4px; transform: scaleX(.72); }
.pos i { background: #1ea8df; }
.neg span { color: #0b3d66; }
.neg i { background: #0a3d62; }
.ticks { display: grid; grid-template-columns: repeat(10, 67.1px); height: 36px; font-size: 18px; line-height: 32px; text-align: center; color: #0b3d66; }
.ticks span { display: block; white-space: nowrap; transform: scaleX(.69); }
.axis-title { text-align: center; font-size: 18px; line-height: 24px; margin: -7px 0 0 -2px; color: #0b3d66; transform: scaleX(.67); }
.gender { flex: none; width: 181px; margin-left: 33px; padding-top: 129px; }
.gender-title { margin: 0 0 0 -49px; font-size: 24px; line-height: 30px; font-weight: 700; color: #0b3d66; white-space: nowrap; transform: scaleX(.7); transform-origin: 0 50%; }
.gender-plot { display: flex; height: 133px; align-items: flex-end; gap: 20px; padding-left: 10px; border-bottom: 2px solid #e6e6e6; }
.gcol { width: 70px; display: flex; flex-direction: column; align-items: center; }
.gcol i { display: block; width: 70px; background: #1ea8df; }
.gcol span { font-size: 17px; line-height: 22px; font-weight: 700; color: #0b3d66; transform: scaleX(.72); }
.gcol-male span { margin-bottom: 5px; }
.gcol-female span { margin-bottom: 9px; }
.gender-ticks { display: flex; gap: 20px; padding-left: 11px; font-size: 17px; line-height: 28px; color: #0b3d66; }
.gender-ticks span { width: 70px; text-align: center; transform: scaleX(.77); }
.footnote { margin: 4px 0 0 138px; font-size: 12px; line-height: 16px; color: #111; white-space: nowrap; transform: scaleX(.71); transform-origin: 0 50%; }
```
